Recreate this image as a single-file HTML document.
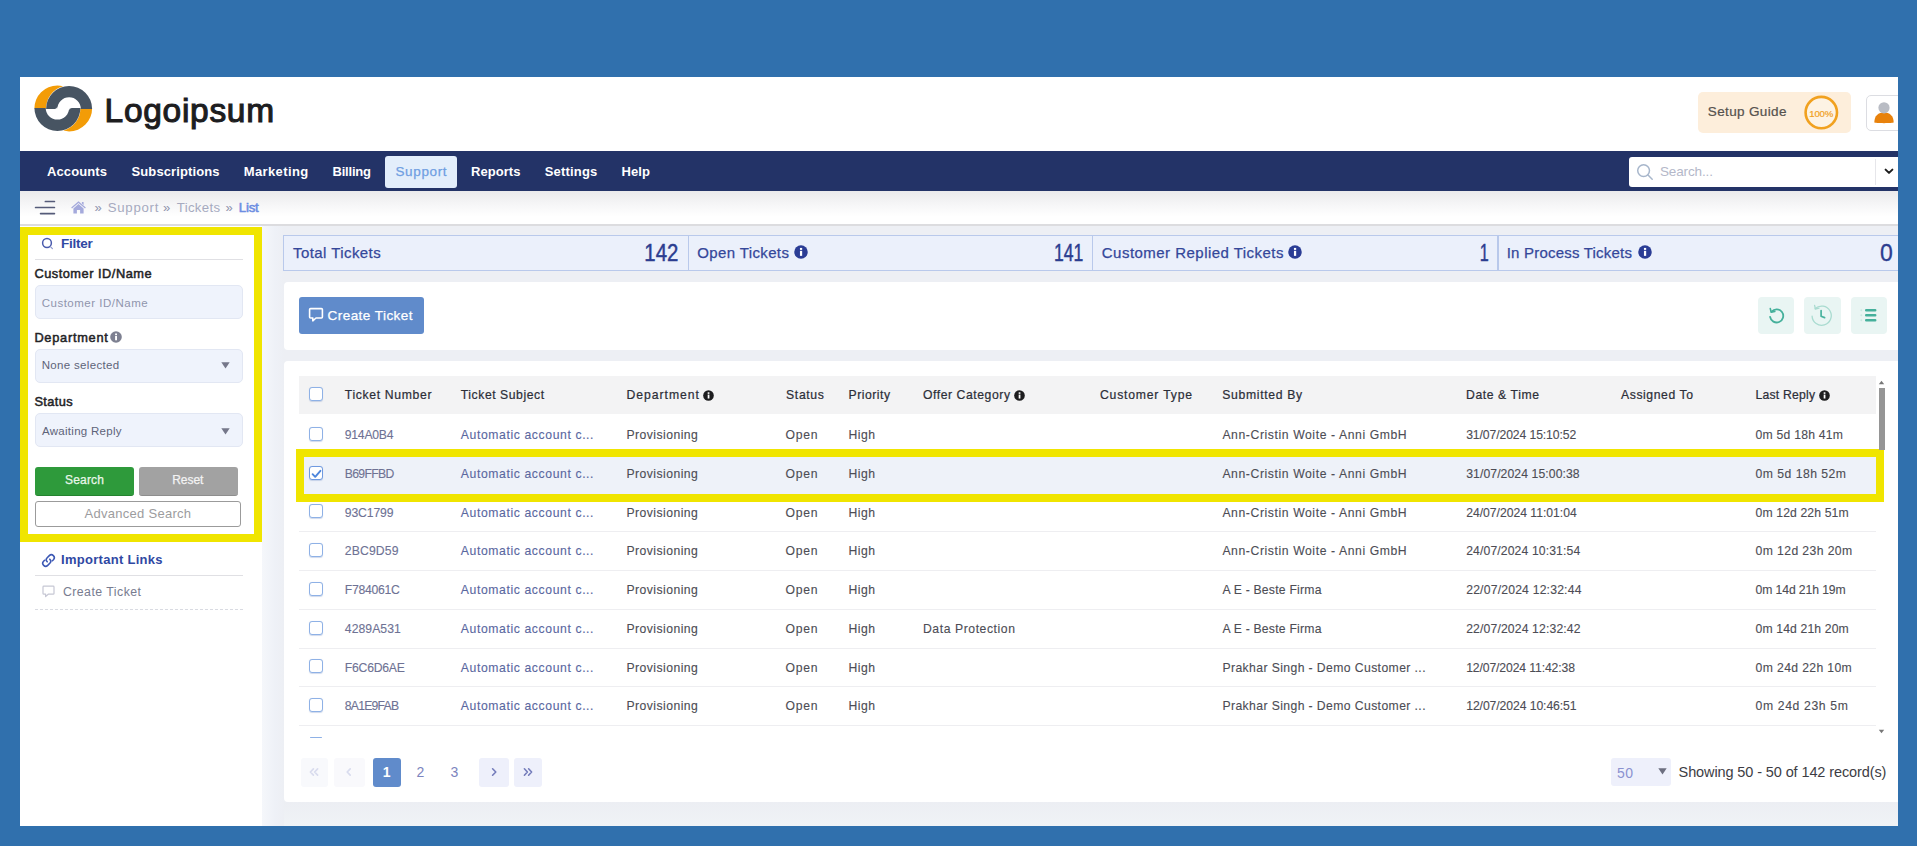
<!DOCTYPE html>
<html lang="en">
<head>
<meta charset="utf-8">
<title>Support Tickets - List</title>
<style>
*{box-sizing:border-box;margin:0;padding:0}
html,body{width:1917px;height:846px;overflow:hidden}
body{background:#3070ad;font-family:"Liberation Sans",sans-serif;position:relative}
.abs,.t,#app div,#app svg,#app i{position:absolute}
.t{white-space:pre;display:block}
#app{position:absolute;left:20px;top:77px;width:1878px;height:749px;background:#fff;overflow:hidden}
/* everything inside #app is positioned in page coordinates via this shim */
#page{left:-20px;top:-77px;width:1917px;height:846px}
#navbar{left:20px;top:151px;width:1878px;height:40px;background:#233367}
#nav-active{left:385px;top:156px;width:72px;height:31.5px;background:#e3eefb;border-radius:3px}
#searchbox{left:1629px;top:157px;width:280px;height:29.5px;background:#fff;border-radius:3px}
#search-div{left:1875px;top:159px;width:1px;height:26px;background:#e6e6ea}
#crumbbar{left:20px;top:191px;width:1878px;height:34px;background:linear-gradient(#eaeaec,#f6f6f7 40%,#fff 75%)}
#crumbline{left:20px;top:224px;width:1878px;height:1.5px;background:#dcdcdf}
#main{left:262px;top:226px;width:1636px;height:600px;background:#edeff4}
#main-shade{left:262px;top:226px;width:22px;height:600px;background:linear-gradient(90deg,#f5f7fb,#eef1f7 60%,#edeff4)}
#main-bottom{left:284px;top:802px;width:1614px;height:24px;background:linear-gradient(#eceef3,#f0f3f6)}
#sidebar{left:20px;top:226px;width:242px;height:600px;background:#fff}
.hl{border:8px solid #f0e500;background:transparent}
#hl-filter{left:20px;top:227px;width:242px;height:314.5px}
#hl-row{left:296px;top:448.5px;width:1587.5px;height:53.5px}
.hr{height:1px;background:#e0e0e4}
.input{background:#eff3fc;border:1px solid #e2e7f3;border-radius:5px}
.btn{border-radius:3px}
#stats{left:283px;top:235px;width:1620px;height:35.5px;background:#ebf0fb;border:1px solid #b9c9eb}
.sdiv{top:236px;width:1.5px;height:34px;background:#b9c9eb}
.card{background:#fff;border-radius:4px}
#card1{left:284px;top:282px;width:1620px;height:68px}
#card2{left:284px;top:361px;width:1620px;height:440.6px}
#thead{left:299px;top:376.4px;width:1576.5px;height:37.4px;background:#f3f3f4}
.rsep{left:299px;width:1576.5px;height:1.2px;background:#eeeef1}
#rowsel{left:299px;top:454px;width:1578px;height:42px;background:#eef2f9}
.cb{width:14px;height:14px;border:1.5px solid #8eb1e6;border-radius:3px;background:#fff;box-shadow:0 0.6px 0.8px rgba(120,150,200,.35)}
.ibtn{top:297px;width:36.5px;height:36.5px;background:#e9f5f3;border-radius:4px}
.pbtn{top:758px;height:28.5px;border-radius:3px}
#scroll-thumb{left:1878.5px;top:387.5px;width:6px;height:62px;background:#959595}

</style>
</head>
<body>
<div id="app"><div id="page">

<!-- ===== top header ===== -->
<svg id="logo" style="left:33px;top:84px" width="61" height="49" viewBox="33 84 61 49">
  <!-- orange crescents -->
  <path d="M34.4 108.6 A23 23 0 0 1 57.4 85.4 Q60 85.4 63.2 86.2 A23 23 0 0 0 46.1 108.6 Z" fill="#f39c07"/>
  <path d="M92.1 108.2 A23 23 0 0 1 69.1 131.4 Q66.5 131.4 63.3 130.6 A23 23 0 0 0 80.4 108.2 Z" fill="#f39c07"/>
  <!-- grey half rings forming the S-shaped opening -->
  <path d="M46.1 108.9 A23 23 0 0 1 92.1 108.9 L80.8 108.9 A11.7 11.7 0 0 0 57.4 108.9 Q57.4 108.9 57.2 106.9 Q56.6 108.9 54.6 108.9 Z" fill="#475462"/>
  <path d="M80.4 107.9 A23 23 0 0 1 34.4 107.9 L45.7 107.9 A11.7 11.7 0 0 0 69.1 107.9 Q69.1 107.9 69.3 109.9 Q69.9 107.9 71.9 107.9 Z" fill="#475462"/>
</svg>

<div id="setup" style="left:1698px;top:92px;width:153px;height:41px;background:#fdeedb;border-radius:5px"></div>
<svg style="left:1802px;top:93px" width="40" height="40" viewBox="0 0 40 40">
  <circle cx="19.3" cy="19.6" r="15.7" fill="#fdf3e4" stroke="#f1a11f" stroke-width="2.6"/>
</svg>
<div id="userbtn" style="left:1866px;top:94.5px;width:44px;height:36.5px;border:1px solid #dcdde2;border-radius:5px;background:#fff"></div>
<svg style="left:1872px;top:100px" width="24" height="24" viewBox="0 0 24 24">
  <path d="M2.3 22.6 C2.3 15.5 6.5 12.4 12 12.4 C17.5 12.4 21.7 15.5 21.7 22.6 C21.7 23.3 2.3 23.3 2.3 22.6 Z" fill="#e8820c"/>
  <circle cx="12" cy="7.8" r="5.6" fill="#b9bcc4"/>
</svg>

<!-- ===== navigation bar ===== -->
<div id="navbar"></div>
<div id="nav-active"></div>
<div id="searchbox"></div>
<div id="search-div"></div>
<svg style="left:1635px;top:161.8px" width="20" height="20" viewBox="0 0 20 20" fill="none" stroke="#a7b6cb" stroke-width="1.5" stroke-linecap="round">
  <circle cx="8.6" cy="8.6" r="5.9"/><path d="M13 13 L17.2 17.2"/>
</svg>
<svg style="left:1882.5px;top:166.5px" width="12" height="9" viewBox="0 0 12 9" fill="none" stroke="#1c1c1c" stroke-width="2" stroke-linecap="round" stroke-linejoin="round">
  <path d="M2.6 2.6 L6 5.9 L9.4 2.6"/>
</svg>

<!-- ===== breadcrumb bar ===== -->
<div id="crumbbar"></div>
<div id="crumbline"></div>
<svg style="left:33px;top:198px" width="24" height="19" viewBox="33 198 24 19" fill="none" stroke="#555b79" stroke-width="1.7" stroke-linecap="round">
  <path d="M45.4 201.5 H54.4 M35.6 207.5 H54.4 M40.6 213.6 H54.4"/>
</svg>
<svg style="left:70px;top:200px" width="17" height="15" viewBox="0 0 17 15" fill="#a5aadc">
  <path d="M8.5 1.2 L15.8 7.6 L15 8.5 L8.5 2.9 L2 8.5 L1.2 7.6 Z"/>
  <path d="M8.5 4.1 L13.6 8.5 V13.6 H10.1 V9.9 H6.9 V13.6 H3.4 V8.5 Z"/>
  <path d="M11.9 1.9 H13.6 V5 L11.9 3.5 Z"/>
</svg>

<!-- ===== sidebar ===== -->
<div id="sidebar"></div>
<div id="main"></div>
<div id="main-shade"></div>
<div id="main-bottom"></div>

<svg style="left:40px;top:236px" width="15" height="15" viewBox="40 236 15 15" fill="none" stroke="#4a5bad" stroke-width="1.5" stroke-linecap="round">
  <circle cx="47" cy="243" r="4.4"/><path d="M50.4 246.6 L52.4 248.7" stroke-width="1.1" stroke="#8a95cc"/>
</svg>
<div class="hr" style="left:34.5px;top:258.5px;width:208px"></div>
<div class="input" style="left:34.5px;top:285px;width:208px;height:33.5px"></div>
<svg class="info" style="left:109.5px;top:331px" width="12" height="12" viewBox="0 0 12 12"><circle cx="6" cy="6" r="5.8" fill="#7d8091"/><rect x="5.1" y="5" width="1.9" height="4.3" fill="#fff"/><rect x="5.1" y="2.5" width="1.9" height="1.7" fill="#fff"/></svg>
<div class="input" style="left:34.5px;top:349px;width:208px;height:33.5px"></div>
<svg style="left:220.5px;top:361.5px" width="9" height="7" viewBox="0 0 9 7"><path d="M0.3 0.3 H8.7 L4.5 6.6 Z" fill="#75778a"/></svg>
<div class="input" style="left:34.5px;top:413px;width:208px;height:34px"></div>
<svg style="left:220.5px;top:427.5px" width="9" height="7" viewBox="0 0 9 7"><path d="M0.3 0.3 H8.7 L4.5 6.6 Z" fill="#75778a"/></svg>
<div class="btn" style="left:34.5px;top:467px;width:99px;height:28.5px;background:#2e9a3b;border-bottom:1.5px solid #24822f"></div>
<div class="btn" style="left:138.5px;top:467px;width:99px;height:28.5px;background:#a2a2a2;border-bottom:1.5px solid #8e8e8e"></div>
<div class="btn" style="left:34.5px;top:500.5px;width:206px;height:26.5px;background:#fff;border:1.2px solid #9b9b9b"></div>
<div id="hl-filter" class="hl"></div>

<svg style="left:40.5px;top:552.5px" width="15" height="15" viewBox="0 0 15 15" fill="none" stroke="#3c58b4" stroke-width="1.6" stroke-linecap="round">
  <path d="M6.2 8.8 A2.9 2.9 0 0 1 6.2 4.7 L8.3 2.6 A2.9 2.9 0 0 1 12.4 6.7 L11.4 7.7"/>
  <path d="M8.8 6.2 A2.9 2.9 0 0 1 8.8 10.3 L6.7 12.4 A2.9 2.9 0 0 1 2.6 8.3 L3.6 7.3"/>
</svg>
<div class="hr" style="left:34.5px;top:574.5px;width:208px"></div>
<svg style="left:42px;top:585px" width="13" height="13" viewBox="0 0 13 13" fill="none" stroke="#c6c7d4" stroke-width="1.2" stroke-linejoin="round">
  <path d="M1.8 1.2 H11.2 Q12 1.2 12 2 V8.4 Q12 9.2 11.2 9.2 H6.2 L3.6 11.6 V9.2 H1.8 Q1 9.2 1 8.4 V2 Q1 1.2 1.8 1.2 Z"/>
</svg>
<div style="left:34.5px;top:609px;width:208px;height:0;border-top:1px dashed #d9dbe2"></div>

<!-- ===== stats strip ===== -->
<div id="stats"></div>
<div class="sdiv" style="left:687.5px"></div>
<div class="sdiv" style="left:1091.5px"></div>
<div class="sdiv" style="left:1497px"></div>
<svg class="info" style="left:794px;top:245px" width="14" height="14" viewBox="0 0 12 12"><circle cx="6" cy="6" r="5.8" fill="#2b3d95"/><rect x="5.1" y="5" width="1.9" height="4.3" fill="#fff"/><rect x="5.1" y="2.5" width="1.9" height="1.7" fill="#fff"/></svg>
<svg class="info" style="left:1288px;top:245px" width="14" height="14" viewBox="0 0 12 12"><circle cx="6" cy="6" r="5.8" fill="#2b3d95"/><rect x="5.1" y="5" width="1.9" height="4.3" fill="#fff"/><rect x="5.1" y="2.5" width="1.9" height="1.7" fill="#fff"/></svg>
<svg class="info" style="left:1637.5px;top:245px" width="14" height="14" viewBox="0 0 12 12"><circle cx="6" cy="6" r="5.8" fill="#2b3d95"/><rect x="5.1" y="5" width="1.9" height="4.3" fill="#fff"/><rect x="5.1" y="2.5" width="1.9" height="1.7" fill="#fff"/></svg>

<!-- ===== action card ===== -->
<div id="card1" class="card"></div>
<div class="btn" style="left:299px;top:296.5px;width:124.5px;height:37px;background:#608bcb"></div>
<svg style="left:308px;top:307px" width="16" height="16" viewBox="0 0 16 16" fill="none" stroke="#fff" stroke-width="1.6" stroke-linejoin="round">
  <path d="M2.6 1.6 H13.4 Q14.4 1.6 14.4 2.6 V10 Q14.4 11 13.4 11 H8 L4.8 13.8 V11 H2.6 Q1.6 11 1.6 10 V2.6 Q1.6 1.6 2.6 1.6 Z"/>
</svg>
<div class="ibtn" style="left:1757.5px"></div>
<div class="ibtn" style="left:1804px"></div>
<div class="ibtn" style="left:1850.5px"></div>
<svg style="left:1766px;top:305px" width="21" height="21" viewBox="1766 305 21 21" fill="none" stroke="#45b09b" stroke-width="1.8" stroke-linecap="round" stroke-linejoin="round">
  <path d="M1771.6 311.6 A6.6 6.6 0 1 1 1770.1 316.9"/><path d="M1770.3 308.6 L1771.2 312.2 L1774.8 311.4" stroke-width="1.6"/>
</svg>
<svg style="left:1810px;top:303px" width="24" height="24" viewBox="1810 303 24 24" fill="none" stroke="#a9dbd0" stroke-width="1.3" stroke-linecap="round" stroke-linejoin="round">
  <path d="M1815.2 308.6 A9.6 9.6 0 1 1 1812.1 316.2"/><path d="M1814.6 305.4 L1815.4 309 L1819 308.2"/><path d="M1821.1 310.6 V316.2 L1824.6 317.6" stroke="#4ab39f" stroke-width="1.7"/>
</svg>
<svg style="left:1858px;top:306px" width="22" height="19" viewBox="1858 306 22 19" fill="none" stroke="#45b09b" stroke-width="2.5" stroke-linecap="round">
  <path d="M1866.2 310.3 H1875.2 M1866.2 315.3 H1875.2 M1866.2 320.2 H1875.2"/>
  <path d="M1861.3 310.3 h0.01 M1861.3 315.3 h0.01 M1861.3 320.2 h0.01" stroke="#cbe9e2" stroke-width="2"/>
</svg>

<!-- ===== tickets card ===== -->
<div id="card2" class="card"></div>
<div id="thead"></div>
<div id="rowsel"></div>
<div class="rsep" style="top:531.3px"></div>
<div class="rsep" style="top:570px"></div>
<div class="rsep" style="top:608.8px"></div>
<div class="rsep" style="top:647.6px"></div>
<div class="rsep" style="top:686.3px"></div>
<div class="rsep" style="top:725px"></div>
<div id="hl-row" class="hl"></div>

<div class="cb" style="left:308.5px;top:387px"></div>
<div class="cb" style="left:308.5px;top:427px"></div>
<div class="cb" style="left:308.5px;top:466px;border-color:#6f9ae0"></div>
<svg style="left:310.5px;top:468.5px" width="11" height="10" viewBox="0 0 11 10" fill="none" stroke="#4d86dc" stroke-width="1.9" stroke-linecap="round" stroke-linejoin="round"><path d="M1.6 5.2 L4.2 7.8 L9.4 1.8"/></svg>
<div class="cb" style="left:308.5px;top:504px"></div>
<div class="cb" style="left:308.5px;top:543px"></div>
<div class="cb" style="left:308.5px;top:582px"></div>
<div class="cb" style="left:308.5px;top:620.5px"></div>
<div class="cb" style="left:308.5px;top:659px"></div>
<div class="cb" style="left:308.5px;top:698px"></div>
<div style="left:309.5px;top:736.8px;width:12.5px;height:1.6px;background:#8eb1e6;border-radius:1px"></div>

<svg class="info" style="left:702.5px;top:389.5px" width="11" height="11" viewBox="0 0 12 12"><circle cx="6" cy="6" r="5.8" fill="#1d1d1f"/><rect x="5.1" y="5" width="1.9" height="4.3" fill="#fff"/><rect x="5.1" y="2.5" width="1.9" height="1.7" fill="#fff"/></svg>
<svg class="info" style="left:1013.5px;top:389.5px" width="11" height="11" viewBox="0 0 12 12"><circle cx="6" cy="6" r="5.8" fill="#1d1d1f"/><rect x="5.1" y="5" width="1.9" height="4.3" fill="#fff"/><rect x="5.1" y="2.5" width="1.9" height="1.7" fill="#fff"/></svg>
<svg class="info" style="left:1818.5px;top:389.5px" width="11" height="11" viewBox="0 0 12 12"><circle cx="6" cy="6" r="5.8" fill="#1d1d1f"/><rect x="5.1" y="5" width="1.9" height="4.3" fill="#fff"/><rect x="5.1" y="2.5" width="1.9" height="1.7" fill="#fff"/></svg>

<!-- table scrollbar -->
<div id="scroll-thumb"></div>
<svg style="left:1878px;top:380px" width="7" height="5" viewBox="0 0 7 5"><path d="M3.5 0.8 L6.2 4.2 H0.8 Z" fill="#777"/></svg>
<svg style="left:1878px;top:729px" width="7" height="5" viewBox="0 0 7 5"><path d="M3.5 4.2 L6.2 0.8 H0.8 Z" fill="#777"/></svg>

<!-- ===== pagination ===== -->
<div class="pbtn" style="left:301px;width:27px;background:#f8f9fc"></div>
<div class="pbtn" style="left:333.5px;width:31px;background:#f9f9fc"></div>
<div class="pbtn" style="left:372.5px;width:28.5px;background:#608bcb"></div>
<div class="pbtn" style="left:479px;width:29.5px;background:#eef0fb"></div>
<div class="pbtn" style="left:513.5px;width:28.5px;background:#eef0fb"></div>
<svg style="left:308px;top:766px" width="12" height="12" viewBox="0 0 12 12" fill="none" stroke="#d9dcee" stroke-width="1.7" stroke-linecap="round" stroke-linejoin="round"><path d="M5.4 2.8 L2.4 6 L5.4 9.2 M9.6 2.8 L6.6 6 L9.6 9.2"/></svg>
<svg style="left:343px;top:766px" width="12" height="12" viewBox="0 0 12 12" fill="none" stroke="#d9dcee" stroke-width="1.7" stroke-linecap="round" stroke-linejoin="round"><path d="M7.2 2.8 L4.2 6 L7.2 9.2"/></svg>
<svg style="left:487.5px;top:766px" width="12" height="12" viewBox="0 0 12 12" fill="none" stroke="#747cbb" stroke-width="1.6" stroke-linecap="round" stroke-linejoin="round"><path d="M4.6 2.8 L7.8 6 L4.6 9.2"/></svg>
<svg style="left:521.5px;top:766px" width="12" height="12" viewBox="0 0 12 12" fill="none" stroke="#747cbb" stroke-width="1.6" stroke-linecap="round" stroke-linejoin="round"><path d="M2.4 2.8 L5.4 6 L2.4 9.2 M6.6 2.8 L9.6 6 L6.6 9.2"/></svg>

<div class="pbtn" style="left:1611px;width:60px;height:28px;background:#eef0fb"></div>
<svg style="left:1657.5px;top:768px" width="9" height="7" viewBox="0 0 9 7"><path d="M0.3 0.3 H8.7 L4.5 6.6 Z" fill="#6d6f80"/></svg>

</div></div>

<div id="labels">
<span class="t" style="left:104.6px;top:86.5px;font-size:33.5px;line-height:47px;color:#1d1d1f;letter-spacing:0.70px;-webkit-text-stroke:1.1px currentColor;">Logoipsum</span>
<span class="t" style="left:1707.8px;top:102.0px;font-size:13.5px;line-height:19px;color:#56524e;letter-spacing:0.36px;-webkit-text-stroke:0.22px currentColor;">Setup Guide</span>
<span class="t" style="left:1809.3px;top:106.7px;font-size:9.6px;line-height:13px;color:#f1a11f;letter-spacing:-0.18px;-webkit-text-stroke:0.22px currentColor;">100%</span>
<span class="t" style="left:47.0px;top:162.7px;font-size:13px;line-height:18px;color:#fff;font-weight:700;letter-spacing:0.11px;">Accounts</span>
<span class="t" style="left:131.5px;top:162.7px;font-size:13px;line-height:18px;color:#fff;font-weight:700;letter-spacing:0.11px;">Subscriptions</span>
<span class="t" style="left:243.7px;top:162.7px;font-size:13px;line-height:18px;color:#fff;font-weight:700;letter-spacing:0.39px;">Marketing</span>
<span class="t" style="left:332.5px;top:162.7px;font-size:13px;line-height:18px;color:#fff;font-weight:700;letter-spacing:-0.20px;">Billing</span>
<span class="t" style="left:395.5px;top:161.9px;font-size:13.5px;line-height:19px;color:#6f9ee2;letter-spacing:0.62px;-webkit-text-stroke:0.25px currentColor;">Support</span>
<span class="t" style="left:471.0px;top:162.7px;font-size:13px;line-height:18px;color:#fff;font-weight:700;letter-spacing:0.06px;">Reports</span>
<span class="t" style="left:544.7px;top:162.7px;font-size:13px;line-height:18px;color:#fff;font-weight:700;letter-spacing:0.19px;">Settings</span>
<span class="t" style="left:621.4px;top:162.7px;font-size:13px;line-height:18px;color:#fff;font-weight:700;letter-spacing:0.11px;">Help</span>
<span class="t" style="left:1659.9px;top:162.0px;font-size:13.5px;line-height:19px;color:#b4b8c9;letter-spacing:-0.13px;">Search...</span>
<span class="t" style="left:94.6px;top:199.0px;font-size:13px;line-height:18px;color:#8f93ad;">&raquo;</span>
<span class="t" style="left:107.8px;top:199.0px;font-size:13.2px;line-height:18px;color:#a6aabf;letter-spacing:0.72px;">Support</span>
<span class="t" style="left:163.0px;top:199.0px;font-size:13px;line-height:18px;color:#8f93ad;">&raquo;</span>
<span class="t" style="left:176.8px;top:199.0px;font-size:13.2px;line-height:18px;color:#a6aabf;letter-spacing:0.32px;">Tickets</span>
<span class="t" style="left:225.5px;top:199.0px;font-size:13px;line-height:18px;color:#8f93ad;">&raquo;</span>
<span class="t" style="left:238.8px;top:199.0px;font-size:13.2px;line-height:18px;color:#6c8ce2;letter-spacing:-0.18px;-webkit-text-stroke:0.55px currentColor;">List</span>
<span class="t" style="left:61.0px;top:233.8px;font-size:13.5px;line-height:19px;color:#2f48a3;font-weight:700;letter-spacing:-0.24px;">Filter</span>
<span class="t" style="left:34.4px;top:264.6px;font-size:12.8px;line-height:18px;color:#232326;letter-spacing:0.51px;-webkit-text-stroke:0.5px currentColor;">Customer ID/Name</span>
<span class="t" style="left:41.7px;top:294.6px;font-size:11.5px;line-height:16px;color:#9095ad;letter-spacing:0.51px;">Customer ID/Name</span>
<span class="t" style="left:34.4px;top:328.6px;font-size:12.8px;line-height:18px;color:#232326;letter-spacing:0.73px;-webkit-text-stroke:0.5px currentColor;">Department</span>
<span class="t" style="left:41.7px;top:357.2px;font-size:11.5px;line-height:16px;color:#5e6379;letter-spacing:0.33px;">None selected</span>
<span class="t" style="left:34.4px;top:392.8px;font-size:12.8px;line-height:18px;color:#232326;letter-spacing:0.42px;-webkit-text-stroke:0.5px currentColor;">Status</span>
<span class="t" style="left:42.0px;top:422.6px;font-size:11.5px;line-height:16px;color:#5e6379;letter-spacing:0.28px;">Awaiting Reply</span>
<span class="t" style="left:65.0px;top:471.9px;font-size:12px;line-height:17px;color:#e9f7ea;letter-spacing:0.19px;-webkit-text-stroke:0.25px currentColor;">Search</span>
<span class="t" style="left:172.2px;top:471.9px;font-size:12px;line-height:17px;color:#f3f3f3;letter-spacing:-0.04px;-webkit-text-stroke:0.25px currentColor;">Reset</span>
<span class="t" style="left:84.5px;top:505.1px;font-size:13px;line-height:18px;color:#9c9c9e;letter-spacing:0.28px;">Advanced Search</span>
<span class="t" style="left:61.0px;top:550.7px;font-size:13px;line-height:18px;color:#2f48a3;font-weight:700;letter-spacing:0.29px;">Important Links</span>
<span class="t" style="left:62.9px;top:584.1px;font-size:12.3px;line-height:17px;color:#787c90;letter-spacing:0.47px;">Create Ticket</span>
<span class="t" style="left:293.0px;top:241.8px;font-size:15px;line-height:21px;color:#34479a;letter-spacing:0.43px;-webkit-text-stroke:0.25px currentColor;">Total Tickets</span>
<span class="t" style="left:639.6px;top:236.8px;font-size:23px;line-height:32px;color:#2b3d90;transform:scaleX(0.886);transform-origin:right center;-webkit-text-stroke:0.45px currentColor;">142</span>
<span class="t" style="left:697.3px;top:241.8px;font-size:15px;line-height:21px;color:#34479a;letter-spacing:0.37px;-webkit-text-stroke:0.25px currentColor;">Open Tickets</span>
<span class="t" style="left:1044.9px;top:236.8px;font-size:23px;line-height:32px;color:#2b3d90;transform:scaleX(0.764);transform-origin:right center;-webkit-text-stroke:0.45px currentColor;">141</span>
<span class="t" style="left:1101.8px;top:241.8px;font-size:15px;line-height:21px;color:#34479a;letter-spacing:0.47px;-webkit-text-stroke:0.25px currentColor;">Customer Replied Tickets</span>
<span class="t" style="left:1476.2px;top:236.8px;font-size:23px;line-height:32px;color:#2b3d90;transform:scaleX(0.703);transform-origin:right center;-webkit-text-stroke:0.45px currentColor;">1</span>
<span class="t" style="left:1506.7px;top:241.8px;font-size:15px;line-height:21px;color:#34479a;letter-spacing:0.21px;-webkit-text-stroke:0.25px currentColor;">In Process Tickets</span>
<span class="t" style="left:1880.0px;top:236.8px;font-size:23px;line-height:32px;color:#2b3d90;-webkit-text-stroke:0.3px currentColor;">0</span>
<span class="t" style="left:327.5px;top:306.1px;font-size:13.5px;line-height:19px;color:#fff;letter-spacing:0.46px;-webkit-text-stroke:0.25px currentColor;">Create Ticket</span>
<span class="t" style="left:344.8px;top:386.7px;font-size:12.2px;line-height:17px;color:#2c2e38;letter-spacing:0.66px;-webkit-text-stroke:0.22px currentColor;">Ticket Number</span>
<span class="t" style="left:460.8px;top:386.7px;font-size:12.2px;line-height:17px;color:#2c2e38;letter-spacing:0.55px;-webkit-text-stroke:0.22px currentColor;">Ticket Subject</span>
<span class="t" style="left:626.5px;top:386.7px;font-size:12.2px;line-height:17px;color:#2c2e38;letter-spacing:0.98px;-webkit-text-stroke:0.22px currentColor;">Department</span>
<span class="t" style="left:786.1px;top:386.7px;font-size:12.2px;line-height:17px;color:#2c2e38;letter-spacing:0.65px;-webkit-text-stroke:0.22px currentColor;">Status</span>
<span class="t" style="left:848.5px;top:386.7px;font-size:12.2px;line-height:17px;color:#2c2e38;letter-spacing:0.51px;-webkit-text-stroke:0.22px currentColor;">Priority</span>
<span class="t" style="left:923.0px;top:386.7px;font-size:12.2px;line-height:17px;color:#2c2e38;letter-spacing:0.56px;-webkit-text-stroke:0.22px currentColor;">Offer Category</span>
<span class="t" style="left:1100.0px;top:386.7px;font-size:12.2px;line-height:17px;color:#2c2e38;letter-spacing:0.80px;-webkit-text-stroke:0.22px currentColor;">Customer Type</span>
<span class="t" style="left:1222.2px;top:386.7px;font-size:12.2px;line-height:17px;color:#2c2e38;letter-spacing:0.68px;-webkit-text-stroke:0.22px currentColor;">Submitted By</span>
<span class="t" style="left:1466.0px;top:386.7px;font-size:12.2px;line-height:17px;color:#2c2e38;letter-spacing:0.59px;-webkit-text-stroke:0.22px currentColor;">Date &amp; Time</span>
<span class="t" style="left:1621.0px;top:386.7px;font-size:12.2px;line-height:17px;color:#2c2e38;letter-spacing:0.58px;-webkit-text-stroke:0.22px currentColor;">Assigned To</span>
<span class="t" style="left:1755.5px;top:386.7px;font-size:12.2px;line-height:17px;color:#2c2e38;letter-spacing:0.21px;-webkit-text-stroke:0.22px currentColor;">Last Reply</span>
<span class="t" style="left:344.8px;top:426.7px;font-size:12.2px;line-height:17px;color:#6e7294;letter-spacing:-0.24px;-webkit-text-stroke:0.12px currentColor;">914A0B4</span>
<span class="t" style="left:460.8px;top:426.7px;font-size:12.2px;line-height:17px;color:#5a679f;letter-spacing:0.61px;-webkit-text-stroke:0.12px currentColor;">Automatic account c...</span>
<span class="t" style="left:626.5px;top:426.7px;font-size:12.2px;line-height:17px;color:#4d4d55;letter-spacing:0.45px;-webkit-text-stroke:0.12px currentColor;">Provisioning</span>
<span class="t" style="left:785.5px;top:426.7px;font-size:12.2px;line-height:17px;color:#4d4d55;letter-spacing:0.72px;-webkit-text-stroke:0.12px currentColor;">Open</span>
<span class="t" style="left:848.5px;top:426.7px;font-size:12.2px;line-height:17px;color:#4d4d55;letter-spacing:0.47px;-webkit-text-stroke:0.12px currentColor;">High</span>
<span class="t" style="left:1222.4px;top:426.7px;font-size:12.2px;line-height:17px;color:#4d4d55;letter-spacing:0.59px;-webkit-text-stroke:0.12px currentColor;">Ann-Cristin Woite - Anni GmbH</span>
<span class="t" style="left:1466.2px;top:426.7px;font-size:12.2px;line-height:17px;color:#4d4d55;letter-spacing:-0.10px;-webkit-text-stroke:0.12px currentColor;">31/07/2024 15:10:52</span>
<span class="t" style="left:1755.6px;top:426.7px;font-size:12.2px;line-height:17px;color:#4d4d55;letter-spacing:0.22px;-webkit-text-stroke:0.12px currentColor;">0m 5d 18h 41m</span>
<span class="t" style="left:344.8px;top:466.0px;font-size:12.2px;line-height:17px;color:#6e7294;letter-spacing:-0.67px;-webkit-text-stroke:0.12px currentColor;">B69FFBD</span>
<span class="t" style="left:460.8px;top:466.0px;font-size:12.2px;line-height:17px;color:#5a679f;letter-spacing:0.61px;-webkit-text-stroke:0.12px currentColor;">Automatic account c...</span>
<span class="t" style="left:626.5px;top:466.0px;font-size:12.2px;line-height:17px;color:#4d4d55;letter-spacing:0.45px;-webkit-text-stroke:0.12px currentColor;">Provisioning</span>
<span class="t" style="left:785.5px;top:466.0px;font-size:12.2px;line-height:17px;color:#4d4d55;letter-spacing:0.72px;-webkit-text-stroke:0.12px currentColor;">Open</span>
<span class="t" style="left:848.5px;top:466.0px;font-size:12.2px;line-height:17px;color:#4d4d55;letter-spacing:0.47px;-webkit-text-stroke:0.12px currentColor;">High</span>
<span class="t" style="left:1222.4px;top:466.0px;font-size:12.2px;line-height:17px;color:#4d4d55;letter-spacing:0.59px;-webkit-text-stroke:0.12px currentColor;">Ann-Cristin Woite - Anni GmbH</span>
<span class="t" style="left:1466.2px;top:466.0px;font-size:12.2px;line-height:17px;color:#4d4d55;letter-spacing:0.09px;-webkit-text-stroke:0.12px currentColor;">31/07/2024 15:00:38</span>
<span class="t" style="left:1755.6px;top:466.0px;font-size:12.2px;line-height:17px;color:#4d4d55;letter-spacing:0.47px;-webkit-text-stroke:0.12px currentColor;">0m 5d 18h 52m</span>
<span class="t" style="left:344.8px;top:504.9px;font-size:12.2px;line-height:17px;color:#6e7294;letter-spacing:-0.13px;-webkit-text-stroke:0.12px currentColor;">93C1799</span>
<span class="t" style="left:460.8px;top:504.9px;font-size:12.2px;line-height:17px;color:#5a679f;letter-spacing:0.61px;-webkit-text-stroke:0.12px currentColor;">Automatic account c...</span>
<span class="t" style="left:626.5px;top:504.9px;font-size:12.2px;line-height:17px;color:#4d4d55;letter-spacing:0.45px;-webkit-text-stroke:0.12px currentColor;">Provisioning</span>
<span class="t" style="left:785.5px;top:504.9px;font-size:12.2px;line-height:17px;color:#4d4d55;letter-spacing:0.72px;-webkit-text-stroke:0.12px currentColor;">Open</span>
<span class="t" style="left:848.5px;top:504.9px;font-size:12.2px;line-height:17px;color:#4d4d55;letter-spacing:0.47px;-webkit-text-stroke:0.12px currentColor;">High</span>
<span class="t" style="left:1222.4px;top:504.9px;font-size:12.2px;line-height:17px;color:#4d4d55;letter-spacing:0.59px;-webkit-text-stroke:0.12px currentColor;">Ann-Cristin Woite - Anni GmbH</span>
<span class="t" style="left:1466.2px;top:504.9px;font-size:12.2px;line-height:17px;color:#4d4d55;letter-spacing:-0.02px;-webkit-text-stroke:0.12px currentColor;">24/07/2024 11:01:04</span>
<span class="t" style="left:1755.6px;top:504.9px;font-size:12.2px;line-height:17px;color:#4d4d55;letter-spacing:0.12px;-webkit-text-stroke:0.12px currentColor;">0m 12d 22h 51m</span>
<span class="t" style="left:344.8px;top:542.5px;font-size:12.2px;line-height:17px;color:#6e7294;letter-spacing:0.14px;-webkit-text-stroke:0.12px currentColor;">2BC9D59</span>
<span class="t" style="left:460.8px;top:542.5px;font-size:12.2px;line-height:17px;color:#5a679f;letter-spacing:0.61px;-webkit-text-stroke:0.12px currentColor;">Automatic account c...</span>
<span class="t" style="left:626.5px;top:542.5px;font-size:12.2px;line-height:17px;color:#4d4d55;letter-spacing:0.45px;-webkit-text-stroke:0.12px currentColor;">Provisioning</span>
<span class="t" style="left:785.5px;top:542.5px;font-size:12.2px;line-height:17px;color:#4d4d55;letter-spacing:0.72px;-webkit-text-stroke:0.12px currentColor;">Open</span>
<span class="t" style="left:848.5px;top:542.5px;font-size:12.2px;line-height:17px;color:#4d4d55;letter-spacing:0.47px;-webkit-text-stroke:0.12px currentColor;">High</span>
<span class="t" style="left:1222.4px;top:542.5px;font-size:12.2px;line-height:17px;color:#4d4d55;letter-spacing:0.59px;-webkit-text-stroke:0.12px currentColor;">Ann-Cristin Woite - Anni GmbH</span>
<span class="t" style="left:1466.2px;top:542.5px;font-size:12.2px;line-height:17px;color:#4d4d55;letter-spacing:0.12px;-webkit-text-stroke:0.12px currentColor;">24/07/2024 10:31:54</span>
<span class="t" style="left:1755.6px;top:542.5px;font-size:12.2px;line-height:17px;color:#4d4d55;letter-spacing:0.39px;-webkit-text-stroke:0.12px currentColor;">0m 12d 23h 20m</span>
<span class="t" style="left:344.8px;top:581.5px;font-size:12.2px;line-height:17px;color:#6e7294;letter-spacing:-0.27px;-webkit-text-stroke:0.12px currentColor;">F784061C</span>
<span class="t" style="left:460.8px;top:581.5px;font-size:12.2px;line-height:17px;color:#5a679f;letter-spacing:0.61px;-webkit-text-stroke:0.12px currentColor;">Automatic account c...</span>
<span class="t" style="left:626.5px;top:581.5px;font-size:12.2px;line-height:17px;color:#4d4d55;letter-spacing:0.45px;-webkit-text-stroke:0.12px currentColor;">Provisioning</span>
<span class="t" style="left:785.5px;top:581.5px;font-size:12.2px;line-height:17px;color:#4d4d55;letter-spacing:0.72px;-webkit-text-stroke:0.12px currentColor;">Open</span>
<span class="t" style="left:848.5px;top:581.5px;font-size:12.2px;line-height:17px;color:#4d4d55;letter-spacing:0.47px;-webkit-text-stroke:0.12px currentColor;">High</span>
<span class="t" style="left:1222.4px;top:581.5px;font-size:12.2px;line-height:17px;color:#4d4d55;letter-spacing:0.22px;-webkit-text-stroke:0.12px currentColor;">A E - Beste Firma</span>
<span class="t" style="left:1466.2px;top:581.5px;font-size:12.2px;line-height:17px;color:#4d4d55;letter-spacing:0.19px;-webkit-text-stroke:0.12px currentColor;">22/07/2024 12:32:44</span>
<span class="t" style="left:1755.6px;top:581.5px;font-size:12.2px;line-height:17px;color:#4d4d55;letter-spacing:-0.11px;-webkit-text-stroke:0.12px currentColor;">0m 14d 21h 19m</span>
<span class="t" style="left:344.8px;top:621.0px;font-size:12.2px;line-height:17px;color:#6e7294;letter-spacing:0.06px;-webkit-text-stroke:0.12px currentColor;">4289A531</span>
<span class="t" style="left:460.8px;top:621.0px;font-size:12.2px;line-height:17px;color:#5a679f;letter-spacing:0.61px;-webkit-text-stroke:0.12px currentColor;">Automatic account c...</span>
<span class="t" style="left:626.5px;top:621.0px;font-size:12.2px;line-height:17px;color:#4d4d55;letter-spacing:0.45px;-webkit-text-stroke:0.12px currentColor;">Provisioning</span>
<span class="t" style="left:785.5px;top:621.0px;font-size:12.2px;line-height:17px;color:#4d4d55;letter-spacing:0.72px;-webkit-text-stroke:0.12px currentColor;">Open</span>
<span class="t" style="left:848.5px;top:621.0px;font-size:12.2px;line-height:17px;color:#4d4d55;letter-spacing:0.47px;-webkit-text-stroke:0.12px currentColor;">High</span>
<span class="t" style="left:923.0px;top:621.0px;font-size:12.2px;line-height:17px;color:#4d4d55;letter-spacing:0.57px;-webkit-text-stroke:0.12px currentColor;">Data Protection</span>
<span class="t" style="left:1222.4px;top:621.0px;font-size:12.2px;line-height:17px;color:#4d4d55;letter-spacing:0.22px;-webkit-text-stroke:0.12px currentColor;">A E - Beste Firma</span>
<span class="t" style="left:1466.2px;top:621.0px;font-size:12.2px;line-height:17px;color:#4d4d55;letter-spacing:0.14px;-webkit-text-stroke:0.12px currentColor;">22/07/2024 12:32:42</span>
<span class="t" style="left:1755.6px;top:621.0px;font-size:12.2px;line-height:17px;color:#4d4d55;letter-spacing:0.13px;-webkit-text-stroke:0.12px currentColor;">0m 14d 21h 20m</span>
<span class="t" style="left:344.8px;top:659.5px;font-size:12.2px;line-height:17px;color:#6e7294;letter-spacing:-0.23px;-webkit-text-stroke:0.12px currentColor;">F6C6D6AE</span>
<span class="t" style="left:460.8px;top:659.5px;font-size:12.2px;line-height:17px;color:#5a679f;letter-spacing:0.61px;-webkit-text-stroke:0.12px currentColor;">Automatic account c...</span>
<span class="t" style="left:626.5px;top:659.5px;font-size:12.2px;line-height:17px;color:#4d4d55;letter-spacing:0.45px;-webkit-text-stroke:0.12px currentColor;">Provisioning</span>
<span class="t" style="left:785.5px;top:659.5px;font-size:12.2px;line-height:17px;color:#4d4d55;letter-spacing:0.72px;-webkit-text-stroke:0.12px currentColor;">Open</span>
<span class="t" style="left:848.5px;top:659.5px;font-size:12.2px;line-height:17px;color:#4d4d55;letter-spacing:0.47px;-webkit-text-stroke:0.12px currentColor;">High</span>
<span class="t" style="left:1222.4px;top:659.5px;font-size:12.2px;line-height:17px;color:#4d4d55;letter-spacing:0.40px;-webkit-text-stroke:0.12px currentColor;">Prakhar Singh - Demo Customer ...</span>
<span class="t" style="left:1466.2px;top:659.5px;font-size:12.2px;line-height:17px;color:#4d4d55;letter-spacing:-0.12px;-webkit-text-stroke:0.12px currentColor;">12/07/2024 11:42:38</span>
<span class="t" style="left:1755.6px;top:659.5px;font-size:12.2px;line-height:17px;color:#4d4d55;letter-spacing:0.36px;-webkit-text-stroke:0.12px currentColor;">0m 24d 22h 10m</span>
<span class="t" style="left:344.8px;top:697.6px;font-size:12.2px;line-height:17px;color:#6e7294;letter-spacing:-0.76px;-webkit-text-stroke:0.12px currentColor;">8A1E9FAB</span>
<span class="t" style="left:460.8px;top:697.6px;font-size:12.2px;line-height:17px;color:#5a679f;letter-spacing:0.61px;-webkit-text-stroke:0.12px currentColor;">Automatic account c...</span>
<span class="t" style="left:626.5px;top:697.6px;font-size:12.2px;line-height:17px;color:#4d4d55;letter-spacing:0.45px;-webkit-text-stroke:0.12px currentColor;">Provisioning</span>
<span class="t" style="left:785.5px;top:697.6px;font-size:12.2px;line-height:17px;color:#4d4d55;letter-spacing:0.72px;-webkit-text-stroke:0.12px currentColor;">Open</span>
<span class="t" style="left:848.5px;top:697.6px;font-size:12.2px;line-height:17px;color:#4d4d55;letter-spacing:0.47px;-webkit-text-stroke:0.12px currentColor;">High</span>
<span class="t" style="left:1222.4px;top:697.6px;font-size:12.2px;line-height:17px;color:#4d4d55;letter-spacing:0.40px;-webkit-text-stroke:0.12px currentColor;">Prakhar Singh - Demo Customer ...</span>
<span class="t" style="left:1466.2px;top:697.6px;font-size:12.2px;line-height:17px;color:#4d4d55;letter-spacing:-0.08px;-webkit-text-stroke:0.12px currentColor;">12/07/2024 10:46:51</span>
<span class="t" style="left:1755.6px;top:697.6px;font-size:12.2px;line-height:17px;color:#4d4d55;letter-spacing:0.63px;-webkit-text-stroke:0.12px currentColor;">0m 24d 23h 5m</span>
<span class="t" style="left:382.8px;top:762.2px;font-size:14px;line-height:20px;color:#fff;font-weight:700;">1</span>
<span class="t" style="left:416.4px;top:762.2px;font-size:14px;line-height:20px;color:#7c84be;">2</span>
<span class="t" style="left:450.6px;top:762.2px;font-size:14px;line-height:20px;color:#7c84be;">3</span>
<span class="t" style="left:1617.0px;top:763.0px;font-size:14px;line-height:20px;color:#8b92d0;letter-spacing:0.42px;">50</span>
<span class="t" style="left:1678.6px;top:762.3px;font-size:14.5px;line-height:20px;color:#3d3d44;letter-spacing:-0.11px;">Showing 50 - 50 of 142 record(s)</span>
</div>
</body>
</html>
